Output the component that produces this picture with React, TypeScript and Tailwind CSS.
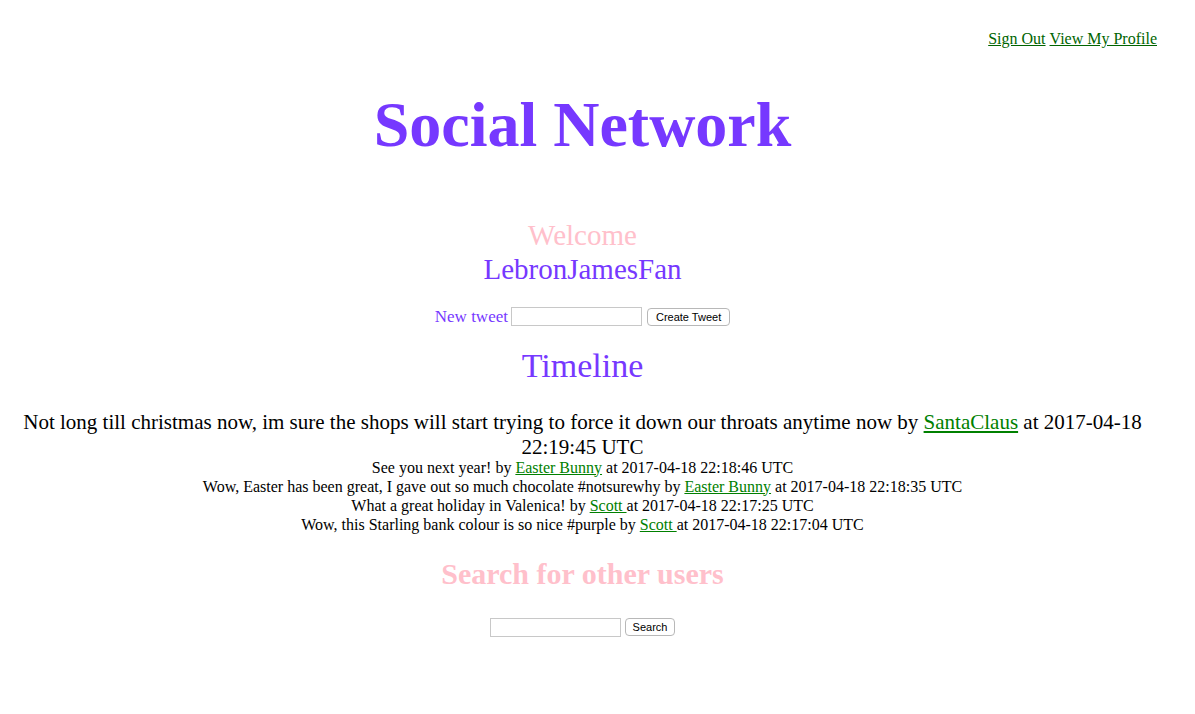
import React from "react";

const tweets = [
  { text: "See you next year!", user: "Easter Bunny", at: "2017-04-18 22:18:46 UTC" },
  { text: "Wow, Easter has been great, I gave out so much chocolate #notsurewhy", user: "Easter Bunny", at: "2017-04-18 22:18:35 UTC" },
  { text: "What a great holiday in Valenica!", user: "Scott ", at: "2017-04-18 22:17:25 UTC" },
  { text: "Wow, this Starling bank colour is so nice #purple", user: "Scott ", at: "2017-04-18 22:17:04 UTC" },
];

export default function App() {
  return (
    <div className="min-h-[714px] bg-white font-['Liberation_Serif',serif] text-black">
      <div className="w-[1165px] px-[8px]">
        {/* top links */}
        <div className="flex justify-end gap-1 pt-[29px] text-[16px] leading-[20px]">
          <a href="#" className="text-[#006400] underline">Sign Out</a>
          <a href="#" className="text-[#006400] underline">View My Profile</a>
        </div>

        <h1 className="mt-[36px] text-center text-[64px] font-bold leading-[80px] text-[#7638ff]">
          Social Network
        </h1>

        <div className="mt-[53px] text-center text-[29px] leading-[34px]">
          <div className="text-[#ffc0cb]">Welcome</div>
          <div className="text-[#7638ff]">LebronJamesFan</div>
        </div>

        <form className="mt-[18px] flex items-center justify-center gap-[3px]" onSubmit={(e) => e.preventDefault()}>
          <label className="text-[17px] text-[#7638ff]">New tweet</label>
          <input className="h-[19px] w-[131px] border border-[#c8c8c8] bg-white" />
          <button className="ml-[2px] h-[18px] rounded-[4px] border border-[#b8b8b8] bg-white px-[8px] font-['Liberation_Sans',sans-serif] text-[11px] leading-[16px]">
            Create Tweet
          </button>
        </form>

        <h2 className="mt-[16px] text-center text-[34px] leading-[40px] text-[#7638ff]">Timeline</h2>

        <div className="mt-[24px] text-center">
          <p className="mb-[-2px] text-[21px] leading-[25px]">
            Not long till christmas now, im sure the shops will start trying to force it down our throats anytime now by{" "}
            <a href="#" className="text-[#008000] underline">SantaClaus</a> at <span className="whitespace-nowrap">2017-04-18</span> 22:19:45 UTC
          </p>
          {tweets.map((t) => (
            <p key={t.text} className="text-[16px] leading-[19px]">
              {t.text} by <a href="#" className="text-[#008000] underline">{t.user}</a>
              {t.user.endsWith(" ") ? "" : " "}at {t.at}
            </p>
          ))}
        </div>

        <h2 className="mt-[22px] text-center text-[30px] font-bold leading-[36px] text-[#ffc0cb]">
          Search for other users
        </h2>

        <form className="mt-[26px] flex items-center justify-center gap-[4px]" onSubmit={(e) => e.preventDefault()}>
          <input className="h-[19px] w-[131px] border border-[#c8c8c8] bg-white" />
          <button className="h-[18px] rounded-[4px] border border-[#b8b8b8] bg-white px-[7px] font-['Liberation_Sans',sans-serif] text-[11px] leading-[16px]">
            Search
          </button>
        </form>
      </div>
    </div>
  );
}
